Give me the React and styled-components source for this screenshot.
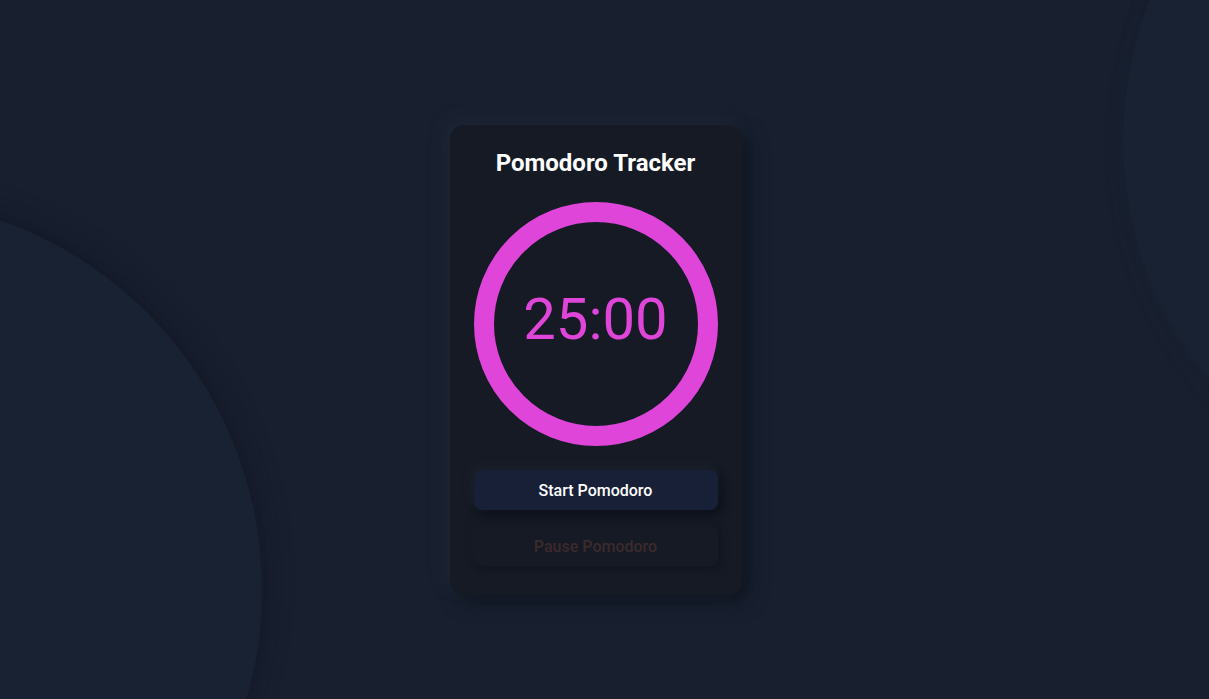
import React, { useState } from 'react';
import styled, { createGlobalStyle } from 'styled-components';

const GlobalStyle = createGlobalStyle`
  html, body {
    margin: 0;
    padding: 0;
    background: #182030;
    font-family: Roboto, "Liberation Sans", sans-serif;
  }
`;

const Page = styled.div`
  position: relative;
  width: 100%;
  height: 699px;
  box-sizing: border-box;
  padding-right: 18px;
  overflow: hidden;
  display: flex;
  justify-content: center;
  align-items: flex-start;
  background: #182030;
`;

const Blob = styled.div`
  position: absolute;
  border-radius: 50%;
  background: #192233;
  width: ${props => props.size}px;
  height: ${props => props.size}px;
  left: ${props => props.x}px;
  top: ${props => props.y}px;
  box-shadow: 10px -10px 22px rgba(14, 16, 24, 0.28), -6px 6px 16px rgba(40, 46, 60, 0.1);
`;

const Card = styled.div`
  position: relative;
  margin-top: 125px;
  width: 292px;
  box-sizing: border-box;
  padding: 24px 24px 29px;
  background: #151a25;
  border-radius: 14px;
  box-shadow: -6px -6px 16px rgba(48, 54, 68, 0.3), 8px 8px 18px rgba(10, 12, 18, 0.5);
  display: flex;
  flex-direction: column;
  align-items: center;
`;

const Title = styled.h2`
  margin: 0 0 25px;
  font-size: 24px;
  line-height: 28px;
  font-weight: 700;
  color: #ffffff;
`;

const Ring = styled.div`
  width: 244px;
  height: 244px;
  box-sizing: border-box;
  border-radius: 50%;
  border: 20px solid #df45d8;
  display: flex;
  align-items: center;
  justify-content: center;
  margin-bottom: 24px;
`;

const Time = styled.span`
  font-size: 58px;
  font-weight: 400;
  color: #df45d8;
  line-height: 1;
  margin-bottom: 10px;
`;

const Button = styled.button`
  width: 244px;
  height: 40px;
  border: none;
  border-radius: 8px;
  font-family: Roboto, "Liberation Sans", sans-serif;
  font-size: 16px;
  font-weight: 500;
  cursor: pointer;
  background: ${props => (props.primary ? '#182037' : '#151a25')};
  color: ${props => (props.primary ? '#ffffff' : '#3c2a2c')};
  box-shadow: ${props =>
    props.primary
      ? '-3px -4px 10px rgba(60, 62, 70, 0.22), 4px 5px 10px rgba(8, 10, 16, 0.55)'
      : '-3px -3px 8px rgba(40, 44, 56, 0.12), 3px 3px 8px rgba(8, 10, 16, 0.25)'};
  & + & {
    margin-top: 16px;
  }
`;

const App = () => {
  const [seconds] = useState(25 * 60);
  const mm = String(Math.floor(seconds / 60)).padStart(2, '0');
  const ss = String(seconds % 60).padStart(2, '0');

  return (
    <>
      <GlobalStyle />
      <Page>
        <Blob size={784} x={-522} y={198} />
        <Blob size={752} x={1123} y={-236} />
        <Card>
          <Title>Pomodoro Tracker</Title>
          <Ring>
            <Time>{mm}:{ss}</Time>
          </Ring>
          <Button primary>Start Pomodoro</Button>
          <Button disabled>Pause Pomodoro</Button>
        </Card>
      </Page>
    </>
  );
};

export default App;
